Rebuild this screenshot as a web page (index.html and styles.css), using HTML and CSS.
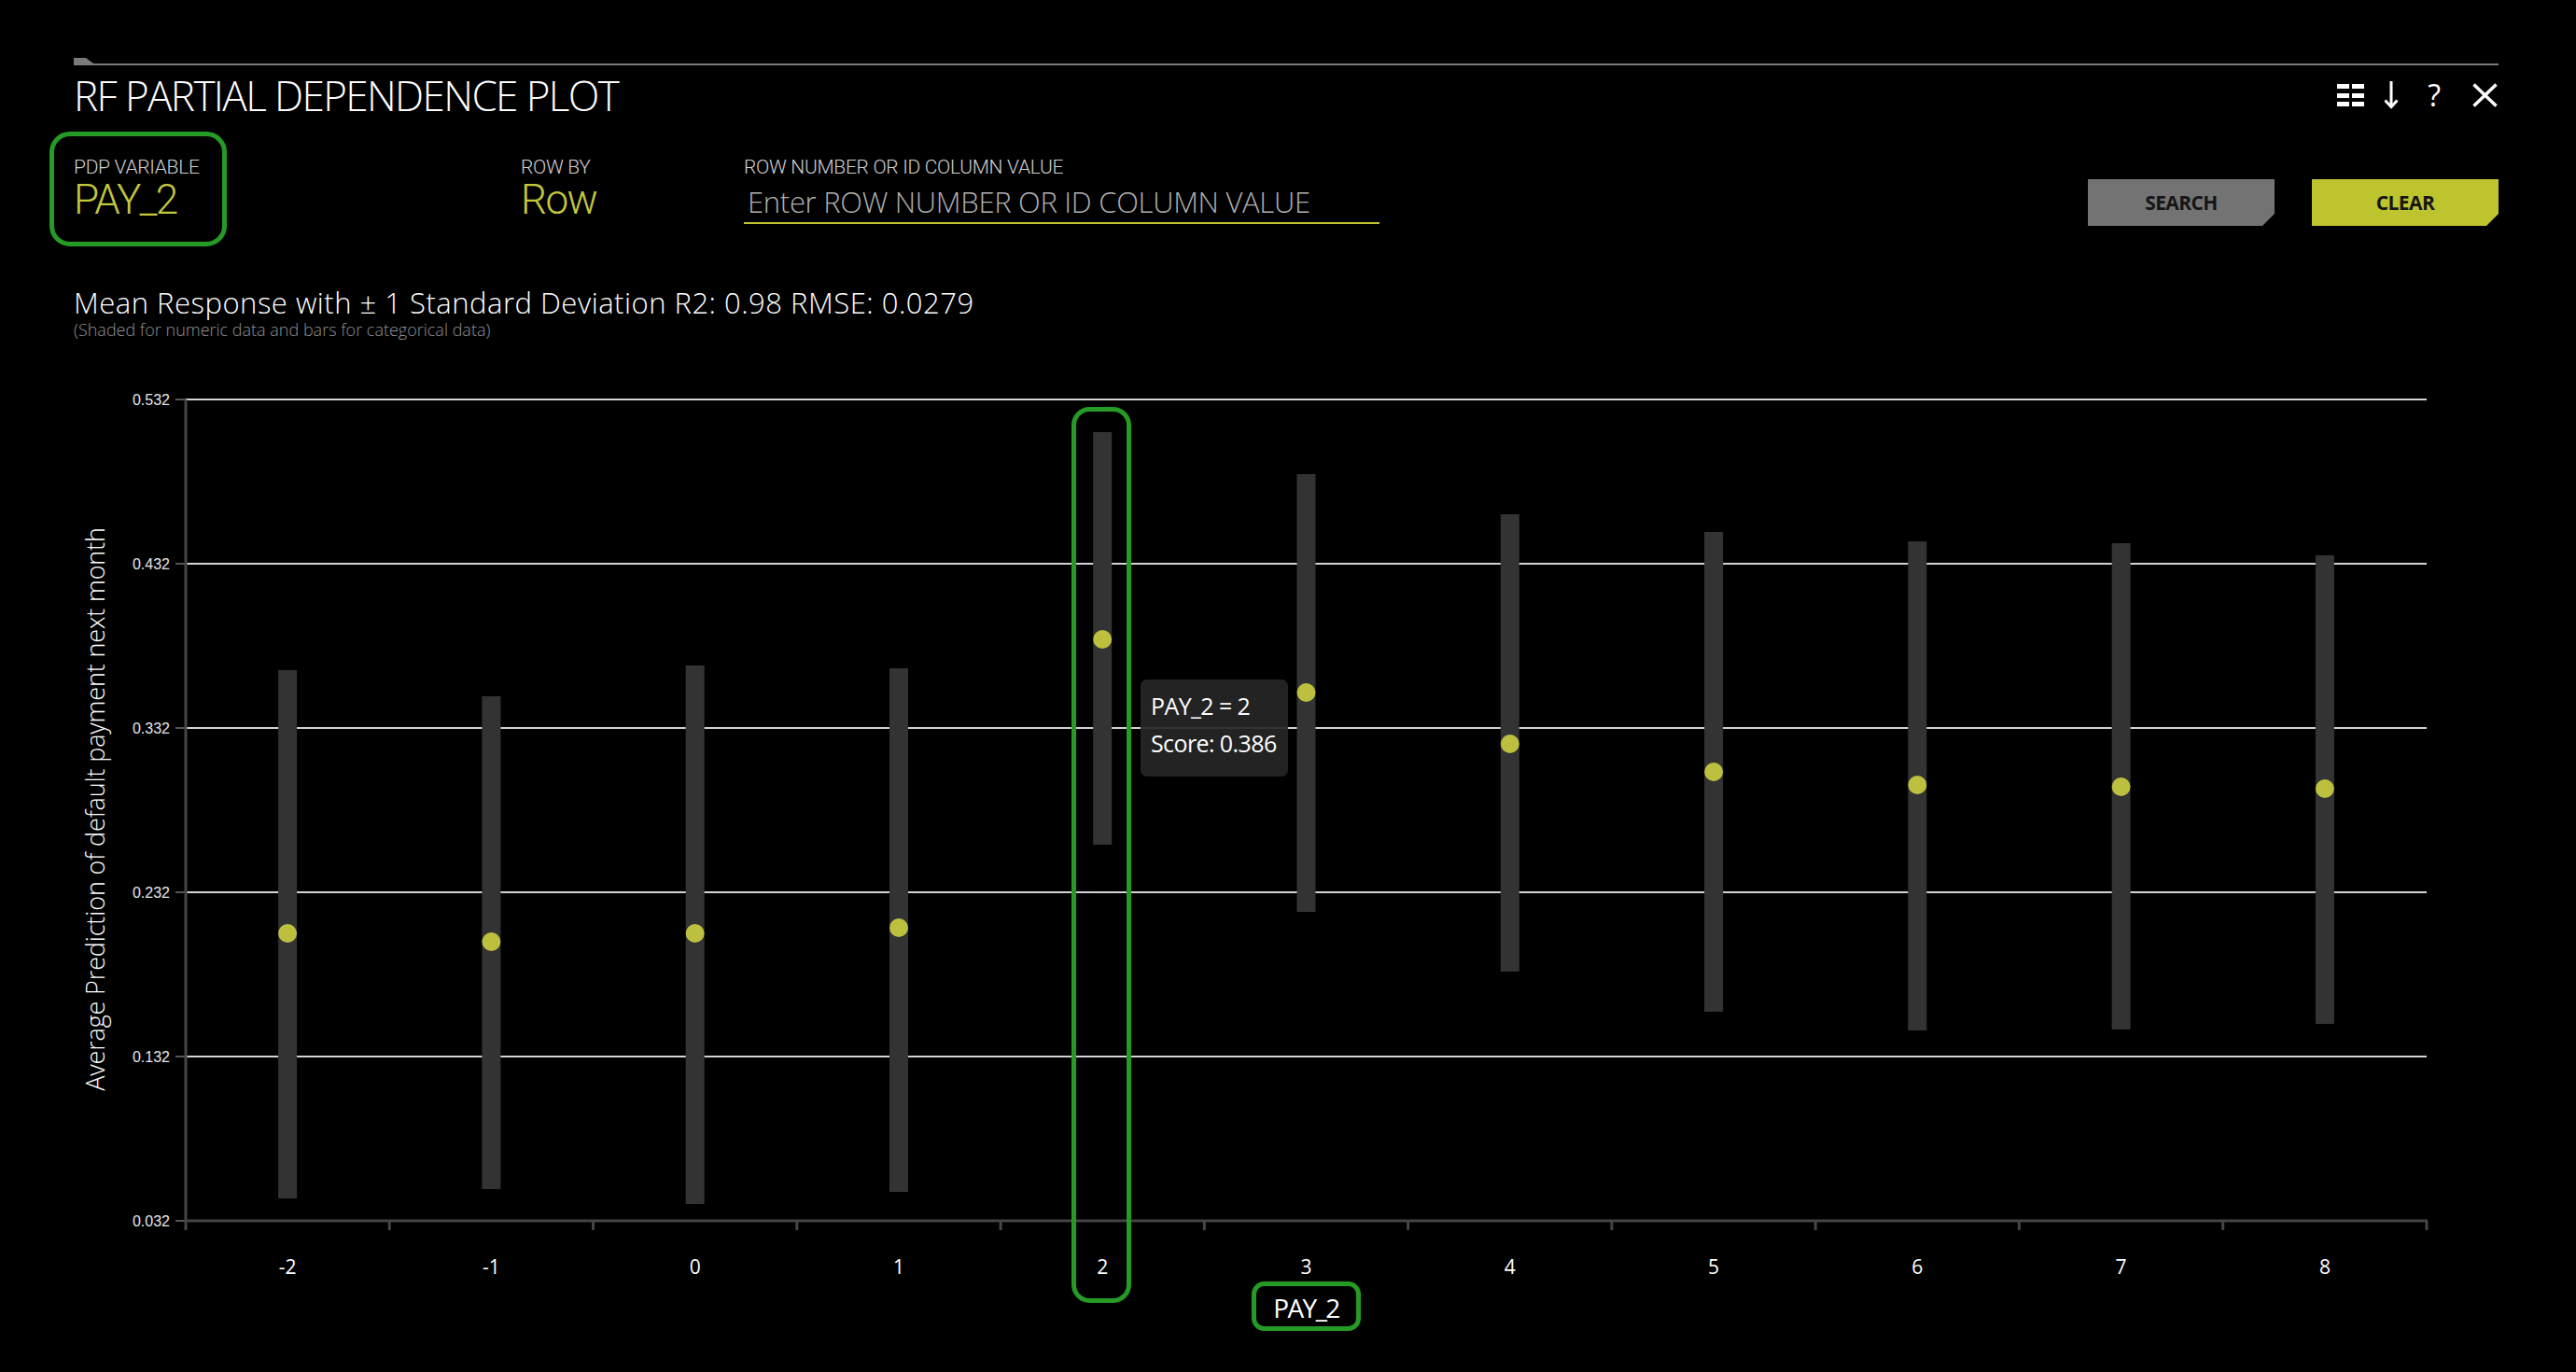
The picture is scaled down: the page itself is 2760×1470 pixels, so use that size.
FILE: index.html
```html
<!DOCTYPE html>
<html lang="en">
<head>
<meta charset="utf-8">
<title>RF Partial Dependence Plot</title>
<link rel="stylesheet" href="styles.css">
</head>
<body>
<div class="page">
  <div class="topbar"><div class="tab"></div><div class="rule"></div></div>

  <div class="titlerow">
    <h1 class="title">RF PARTIAL DEPENDENCE PLOT</h1>
    <div class="icons">
      <svg class="ic ic-grid" width="29" height="24" viewBox="0 0 29 24">
        <rect x="0" y="0" width="13" height="5"/><rect x="16" y="0" width="13" height="5"/>
        <rect x="0" y="10" width="13" height="5"/><rect x="16" y="10" width="13" height="5"/>
        <rect x="0" y="19" width="13" height="5"/><rect x="16" y="19" width="13" height="5"/>
      </svg>
      <svg class="ic ic-down" width="16" height="30" viewBox="0 0 16 30">
        <line x1="8" y1="0" x2="8" y2="27" stroke="#fff" stroke-width="3"/>
        <polyline points="1.5,20.5 8,27.5 14.5,20.5" fill="none" stroke="#fff" stroke-width="3"/>
      </svg>
      <span class="ic ic-help">?</span>
      <svg class="ic ic-close" width="27" height="26" viewBox="0 0 27 26">
        <line x1="1.5" y1="1.5" x2="25.5" y2="24.5" stroke="#fff" stroke-width="3.5"/>
        <line x1="25.5" y1="1.5" x2="1.5" y2="24.5" stroke="#fff" stroke-width="3.5"/>
      </svg>
    </div>
  </div>

  <div class="fields">
    <div class="field f-pdp">
      <div class="label">PDP VARIABLE</div>
      <div class="value">PAY_2</div>
      <div class="highlight"></div>
    </div>
    <div class="field f-rowby">
      <div class="label">ROW BY</div>
      <div class="value">Row</div>
    </div>
    <div class="field f-rownum">
      <div class="label">ROW NUMBER OR ID COLUMN VALUE</div>
      <input class="input" type="text" placeholder="Enter ROW NUMBER OR ID COLUMN VALUE">
    </div>
    <div class="buttons">
      <button class="btn btn-search">SEARCH</button>
      <button class="btn btn-clear">CLEAR</button>
    </div>
  </div>

  <div class="charthead">
    <div class="ctitle">Mean Response with ± 1 Standard Deviation R2: 0.98 RMSE: 0.0279</div>
    <div class="csub">(Shaded for numeric data and bars for categorical data)</div>
  </div>

  <div class="chart">
    <svg width="2598" height="1090" viewBox="79 380 2598 1090">
      <g class="grid">
        <line x1="199" y1="428" x2="2600" y2="428"/>
        <line x1="199" y1="604" x2="2600" y2="604"/>
        <line x1="199" y1="780" x2="2600" y2="780"/>
        <line x1="199" y1="956" x2="2600" y2="956"/>
        <line x1="199" y1="1132" x2="2600" y2="1132"/>
      </g>
      <g class="yticks">
        <line x1="188" y1="428" x2="199" y2="428"/>
        <line x1="188" y1="604" x2="199" y2="604"/>
        <line x1="188" y1="780" x2="199" y2="780"/>
        <line x1="188" y1="956" x2="199" y2="956"/>
        <line x1="188" y1="1132" x2="199" y2="1132"/>
        <line x1="188" y1="1308" x2="199" y2="1308"/>
      </g>
      <g class="ylabels">
        <text x="182" y="434">0.532</text>
        <text x="182" y="610">0.432</text>
        <text x="182" y="786">0.332</text>
        <text x="182" y="962">0.232</text>
        <text x="182" y="1138">0.132</text>
        <text x="182" y="1314">0.032</text>
      </g>
      <text class="ytitle" transform="translate(112,867) rotate(-90)">Average Prediction of default payment next month</text>

      <g class="bars">
        <rect x="298.1" y="718" width="20" height="566"/>
        <rect x="516.4" y="746" width="20" height="528"/>
        <rect x="734.7" y="713" width="20" height="577"/>
        <rect x="953.0" y="716" width="20" height="561"/>
        <rect x="1171.2" y="463" width="20" height="442"/>
        <rect x="1389.5" y="508" width="20" height="469"/>
        <rect x="1607.8" y="551" width="20" height="490"/>
        <rect x="1826.1" y="570" width="20" height="514"/>
        <rect x="2044.3" y="580" width="20" height="524"/>
        <rect x="2262.6" y="582" width="20" height="521"/>
        <rect x="2480.9" y="595" width="20" height="502"/>
      </g>
      <g class="dots">
        <circle cx="308.1" cy="1000" r="10"/>
        <circle cx="526.4" cy="1009" r="10"/>
        <circle cx="744.7" cy="1000" r="10"/>
        <circle cx="963.0" cy="994" r="10"/>
        <circle cx="1181.2" cy="685" r="10"/>
        <circle cx="1399.5" cy="742" r="10"/>
        <circle cx="1617.8" cy="797" r="10"/>
        <circle cx="1836.1" cy="827" r="10"/>
        <circle cx="2054.3" cy="841" r="10"/>
        <circle cx="2272.6" cy="843" r="10"/>
        <circle cx="2490.9" cy="845" r="10"/>
      </g>

      <g class="axis">
        <line x1="199" y1="428" x2="199" y2="1309"/>
        <line x1="197.5" y1="1308" x2="2601" y2="1308"/>
        <line x1="199" y1="1308" x2="199" y2="1318"/>
        <line x1="417.3" y1="1308" x2="417.3" y2="1318"/>
        <line x1="635.5" y1="1308" x2="635.5" y2="1318"/>
        <line x1="853.8" y1="1308" x2="853.8" y2="1318"/>
        <line x1="1072.1" y1="1308" x2="1072.1" y2="1318"/>
        <line x1="1290.4" y1="1308" x2="1290.4" y2="1318"/>
        <line x1="1508.6" y1="1308" x2="1508.6" y2="1318"/>
        <line x1="1726.9" y1="1308" x2="1726.9" y2="1318"/>
        <line x1="1945.2" y1="1308" x2="1945.2" y2="1318"/>
        <line x1="2163.4" y1="1308" x2="2163.4" y2="1318"/>
        <line x1="2381.7" y1="1308" x2="2381.7" y2="1318"/>
        <line x1="2600" y1="1308" x2="2600" y2="1318"/>
      </g>
      <g class="xlabels">
        <text x="308.1" y="1365">-2</text>
        <text x="526.4" y="1365">-1</text>
        <text x="744.7" y="1365">0</text>
        <text x="963.0" y="1365">1</text>
        <text x="1181.2" y="1365">2</text>
        <text x="1399.5" y="1365">3</text>
        <text x="1617.8" y="1365">4</text>
        <text x="1836.1" y="1365">5</text>
        <text x="2054.3" y="1365">6</text>
        <text x="2272.6" y="1365">7</text>
        <text x="2490.9" y="1365">8</text>
      </g>
      <text class="xtitle" x="1399.5" y="1412">PAY_2</text>

      <rect class="mark" x="1150.5" y="438.5" width="59" height="955" rx="17"/>
      <rect class="mark" x="1343.5" y="1375.5" width="112" height="48" rx="11"/>
    </svg>

    <div class="tooltip">
      <div>PAY_2 = 2</div>
      <div>Score: 0.386</div>
    </div>
  </div>
</div>
</body>
</html>
```

FILE: styles.css
```css
* { box-sizing: border-box; }

html, body {
  margin: 0;
  padding: 0;
  background: #000;
}

body {
  width: 2760px;
  height: 1470px;
  overflow: hidden;
  font-family: "Open Sans", "DejaVu Sans", sans-serif;
  font-weight: 300;
  color: #fff;
}

.page {
  padding: 0 83px 0 79px;
}

/* top rule with tab */
.topbar {
  margin-top: 62px;
  height: 8px;
  display: flex;
  align-items: flex-end;
}
.tab {
  width: 21px;
  height: 8px;
  background: #7a7a7a;
  clip-path: polygon(0 0, 13px 0, 100% 6px, 100% 100%, 0 100%);
}
.rule {
  flex: 1;
  height: 2px;
  background: #7a7a7a;
}

/* title row */
.titlerow {
  margin-top: 8px;
  height: 48px;
  display: flex;
  justify-content: space-between;
  align-items: center;
}
.title {
  margin: 0;
  font-weight: 300;
  font-size: 44px;
  line-height: 48px;
  letter-spacing: -1.6px;
  color: #fff;
}
.icons {
  display: flex;
  align-items: center;
  margin-right: 1px;
}
.ic { display: block; }
.ic-grid { fill: #fff; }
.ic-down { margin-left: 21px; }
.ic-help {
  margin-left: 31px;
  font-size: 32px;
  line-height: 30px;
  font-weight: 400;
  color: #fff;
}
.ic-close { margin-left: 34px; }

/* fields row */
.fields {
  margin-top: 41px;
  display: flex;
  align-items: flex-start;
}
.field { position: relative; }
.f-pdp { width: 479px; }
.f-rowby { width: 239px; }
.f-rownum { width: 681px; }

.label {
  font-family: Roboto, "Open Sans", sans-serif;
  font-weight: 300;
  font-size: 21px;
  line-height: 24px;
  letter-spacing: -0.3px;
  color: #d0d0d0;
  white-space: nowrap;
}
.value {
  font-family: Roboto, "Open Sans", sans-serif;
  font-weight: 300;
  font-size: 44px;
  line-height: 46px;
  letter-spacing: -1.8px;
  color: #c4c83c;
}
.f-rowby .value { letter-spacing: -1.5px; }
.input {
  display: block;
  width: 100%;
  height: 49px;
  margin: 0;
  padding: 7px 0 4px 4px;
  background: transparent;
  border: 0;
  border-bottom: 2px solid #c0c430;
  border-radius: 0;
  outline: none;
  font-family: inherit;
  font-weight: 300;
  font-size: 31px;
  line-height: 36px;
  letter-spacing: -0.3px;
  color: #fff;
}
.input::placeholder { color: #b0b0b0; opacity: 1; }

.highlight {
  position: absolute;
  left: -26px;
  top: -26px;
  width: 190px;
  height: 123px;
  border: 5px solid #259a25;
  border-radius: 22px;
}

.buttons {
  margin-left: auto;
  margin-top: 25px;
  display: flex;
  gap: 40px;
}
.btn {
  width: 200px;
  height: 50px;
  border: 0;
  padding: 0;
  font-family: inherit;
  font-weight: 700;
  font-size: 21px;
  letter-spacing: -0.6px;
  color: #151515;
  clip-path: polygon(0 0, 100% 0, 100% calc(100% - 13px), calc(100% - 13px) 100%, 0 100%);
}
.btn-search { background: #737373; }
.btn-clear { background: #bec42e; }

/* chart heading */
.charthead { margin-top: 64px; }
.ctitle {
  font-size: 31px;
  line-height: 36px;
  letter-spacing: 0.5px;
  color: #fff;
}
.csub {
  font-size: 18px;
  line-height: 22px;
  color: #909090;
}

/* chart */
.chart {
  position: relative;
  margin-top: 16px;
  height: 1090px;
}
.chart svg { display: block; }

.grid line { stroke: #d4d4d4; stroke-width: 2; }
.yticks line { stroke: #555; stroke-width: 2; }
.axis line { stroke: #454545; stroke-width: 3; }
.ylabels text {
  font-family: "Liberation Sans", Arial, sans-serif;
  font-weight: 400;
  font-size: 16px;
  fill: #e6e6e6;
  text-anchor: end;
}
.ytitle {
  font-size: 27px;
  letter-spacing: -0.15px;
  fill: #fff;
  text-anchor: middle;
}
.bars rect { fill: #333; }
.dots circle { fill: #bcc03e; }
.xlabels text {
  font-size: 21px;
  font-weight: 400;
  fill: #fff;
  text-anchor: middle;
}
.xtitle {
  font-size: 28px;
  font-weight: 400;
  letter-spacing: -1.6px;
  fill: #fff;
  text-anchor: middle;
}
.mark {
  fill: none;
  stroke: #259a25;
  stroke-width: 5;
}

.tooltip {
  position: absolute;
  left: 1143px;
  top: 348px;
  width: 158px;
  height: 104px;
  padding: 8px 0 0 11px;
  background: rgba(38, 38, 38, 0.92);
  border-radius: 7px;
  font-size: 25px;
  font-weight: 400;
  line-height: 40px;
  letter-spacing: -0.6px;
  color: #fff;
  white-space: nowrap;
}
```
